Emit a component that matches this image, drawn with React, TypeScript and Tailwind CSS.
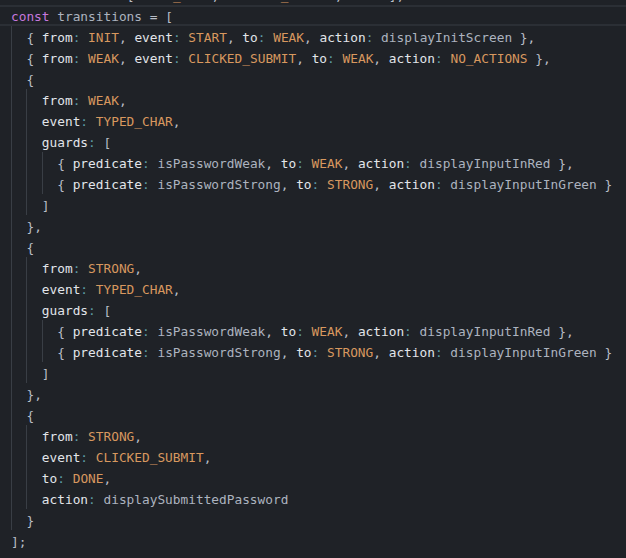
const code = [
  'const events = [TYPED_CHAR, CLICKED_SUBMIT, START];',
  'const transitions = [',
  '  { from: INIT, event: START, to: WEAK, action: displayInitScreen },',
  '  { from: WEAK, event: CLICKED_SUBMIT, to: WEAK, action: NO_ACTIONS },',
  '  {',
  '    from: WEAK,',
  '    event: TYPED_CHAR,',
  '    guards: [',
  '      { predicate: isPasswordWeak, to: WEAK, action: displayInputInRed },',
  '      { predicate: isPasswordStrong, to: STRONG, action: displayInputInGreen }',
  '    ]',
  '  },',
  '  {',
  '    from: STRONG,',
  '    event: TYPED_CHAR,',
  '    guards: [',
  '      { predicate: isPasswordWeak, to: WEAK, action: displayInputInRed },',
  '      { predicate: isPasswordStrong, to: STRONG, action: displayInputInGreen }',
  '    ]',
  '  },',
  '  {',
  '    from: STRONG,',
  '    event: CLICKED_SUBMIT,',
  '    to: DONE,',
  '    action: displaySubmittedPassword',
  '  }',
  '];',
]

const colors = {
  keyword: 'text-[#c678dd]',
  prop: 'text-[#e2e5ea]',
  colon: 'text-[#5d9aa4]',
  constant: 'text-[#d8985f]',
  ident: 'text-[#acb3bf]',
  punct: 'text-[#b9bec7]',
  space: '',
}

type Kind = keyof typeof colors

const tokenize = (text: string) => {
  const parts = text.match(/[A-Za-z_][A-Za-z0-9_]*|\s+|./g) ?? []
  return parts.map((part, i): [string, Kind] => {
    if (/^\s+$/.test(part)) return [part, 'space']
    if (part === 'const') return [part, 'keyword']
    if (part === ':') return [part, 'colon']
    if (/^[A-Za-z_]/.test(part)) {
      if (parts[i + 1] === ':') return [part, 'prop']
      if (/^[A-Z_]+$/.test(part)) return [part, 'constant']
      return [part, 'ident']
    }
    return [part, 'punct']
  })
}

const Line = ({ text, active }: { text: string; active?: boolean }) => {
  const indent = text.match(/^ */)![0].length
  const levels = Math.floor(indent / 2)
  const body = text.slice(levels * 2)
  return (
    <div
      className={
        active
          ? 'flex h-[21px] items-center whitespace-pre pl-[11px] border-y-2 border-[#2b2f35]'
          : 'flex h-[21px] items-stretch whitespace-pre pl-[11px]'
      }
    >
      {Array.from({ length: levels }).map((_, i) => (
        <span key={i} className="w-[2ch] shrink-0 border-l border-[#393e45]" />
      ))}
      <span className="flex items-center pt-[2px]">
        {tokenize(body).map(([t, kind], i) => (
          <span key={i} className={colors[kind]}>
            {t}
          </span>
        ))}
      </span>
    </div>
  )
}

export default function App() {
  return (
    <div className="h-[558px] w-[626px] overflow-hidden bg-[#1f2227] font-['DejaVu_Sans_Mono',monospace] text-[12.8px] leading-[21px]">
      <div className="mt-[-16px]">
        {code.map((line, i) => (
          <Line key={i} text={line} active={i === 1} />
        ))}
      </div>
    </div>
  )
}
